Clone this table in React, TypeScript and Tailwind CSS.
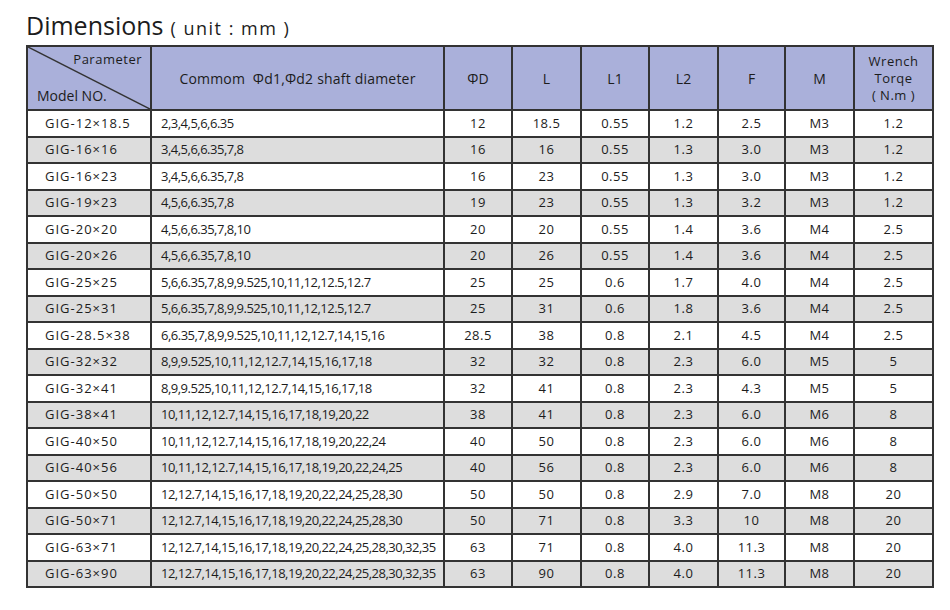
const rows: string[][] = [
  ['GIG-12×18.5', '2,3,4,5,6,6.35', '12', '18.5', '0.55', '1.2', '2.5', 'M3', '1.2'],
  ['GIG-16×16', '3,4,5,6,6.35,7,8', '16', '16', '0.55', '1.3', '3.0', 'M3', '1.2'],
  ['GIG-16×23', '3,4,5,6,6.35,7,8', '16', '23', '0.55', '1.3', '3.0', 'M3', '1.2'],
  ['GIG-19×23', '4,5,6,6.35,7,8', '19', '23', '0.55', '1.3', '3.2', 'M3', '1.2'],
  ['GIG-20×20', '4,5,6,6.35,7,8,10', '20', '20', '0.55', '1.4', '3.6', 'M4', '2.5'],
  ['GIG-20×26', '4,5,6,6.35,7,8,10', '20', '26', '0.55', '1.4', '3.6', 'M4', '2.5'],
  ['GIG-25×25', '5,6,6.35,7,8,9,9.525,10,11,12,12.5,12.7', '25', '25', '0.6', '1.7', '4.0', 'M4', '2.5'],
  ['GIG-25×31', '5,6,6.35,7,8,9,9.525,10,11,12,12.5,12.7', '25', '31', '0.6', '1.8', '3.6', 'M4', '2.5'],
  ['GIG-28.5×38', '6,6.35,7,8,9,9.525,10,11,12,12.7,14,15,16', '28.5', '38', '0.8', '2.1', '4.5', 'M4', '2.5'],
  ['GIG-32×32', '8,9,9.525,10,11,12,12.7,14,15,16,17,18', '32', '32', '0.8', '2.3', '6.0', 'M5', '5'],
  ['GIG-32×41', '8,9,9.525,10,11,12,12.7,14,15,16,17,18', '32', '41', '0.8', '2.3', '4.3', 'M5', '5'],
  ['GIG-38×41', '10,11,12,12.7,14,15,16,17,18,19,20,22', '38', '41', '0.8', '2.3', '6.0', 'M6', '8'],
  ['GIG-40×50', '10,11,12,12.7,14,15,16,17,18,19,20,22,24', '40', '50', '0.8', '2.3', '6.0', 'M6', '8'],
  ['GIG-40×56', '10,11,12,12.7,14,15,16,17,18,19,20,22,24,25', '40', '56', '0.8', '2.3', '6.0', 'M6', '8'],
  ['GIG-50×50', '12,12.7,14,15,16,17,18,19,20,22,24,25,28,30', '50', '50', '0.8', '2.9', '7.0', 'M8', '20'],
  ['GIG-50×71', '12,12.7,14,15,16,17,18,19,20,22,24,25,28,30', '50', '71', '0.8', '3.3', '10', 'M8', '20'],
  ['GIG-63×71', '12,12.7,14,15,16,17,18,19,20,22,24,25,28,30,32,35', '63', '71', '0.8', '4.0', '11.3', 'M8', '20'],
  ['GIG-63×90', '12,12.7,14,15,16,17,18,19,20,22,24,25,28,30,32,35', '63', '90', '0.8', '4.0', '11.3', 'M8', '20'],
]

const widths = ['w-[124px]', 'w-[293px]', 'w-[68px]', 'w-[69px]', 'w-[68px]', 'w-[69px]', 'w-[67px]', 'w-[69px]', 'w-[79px]']
const heads = ['ΦD', 'L', 'L1', 'L2', 'F', 'M']

export default function App() {
  return (
    <div className="w-[950px] h-[610px] bg-white text-[#1c1c1c] font-['Open_Sans','Liberation_Sans',sans-serif]">
      <div className="pt-[8px] pl-[26px] flex items-baseline">
        <span className="text-[25px] leading-[34px]">Dimensions</span>
        <span className="text-[18px] tracking-[1.5px] ml-[7px]">( unit : mm )</span>
      </div>
      <table className="ml-[26px] mt-[3px] w-[906px] table-fixed border-collapse border-2 border-[#333]">
        <colgroup>
          {widths.map((w, i) => (
            <col key={i} className={w} />
          ))}
        </colgroup>
        <thead>
          <tr className="h-[64px] bg-[#aab0da] text-[13px]">
            <th className="relative border-2 border-[#333] p-0 font-normal">
              <svg className="absolute inset-0 w-full h-full" preserveAspectRatio="none" viewBox="0 0 100 100">
                <line x1="0" y1="0" x2="100" y2="100" stroke="#333" strokeWidth="1.5" vectorEffect="non-scaling-stroke" />
              </svg>
              <div className="absolute right-[8px] top-[3px] tracking-[0.5px]">Parameter</div>
              <div className="absolute left-[9px] bottom-[3px] text-[14px]">Model NO.</div>
            </th>
            <th className="border-2 border-[#333] font-normal text-[14px] tracking-[0.2px]">
              Commom&nbsp;&nbsp;Φd1,Φd2 shaft diameter
            </th>
            {heads.map((h) => (
              <th key={h} className="border-2 border-[#333] font-normal text-[14px]">
                {h}
              </th>
            ))}
            <th className="border-2 border-[#333] font-normal leading-[17px] tracking-[0.5px]">
              Wrench
              <br />
              Torqe
              <br />( N.m )
            </th>
          </tr>
        </thead>
        <tbody>
          {rows.map((r, i) => (
            <tr key={i} className={`h-[26.5px] text-[13px] ${i % 2 ? 'bg-[#dddddd]' : 'bg-white'}`}>
              <td className="border-2 border-[#333] text-left pl-[17px] tracking-[1px] p-0 whitespace-nowrap">{r[0]}</td>
              <td className="border-2 border-[#333] pl-[9px] p-0 tracking-[-0.5px] whitespace-nowrap">{r[1]}</td>
              {r.slice(2).map((c, j) => (
                <td key={j} className="border-2 border-[#333] text-center p-0 tracking-[0.5px]">
                  {c}
                </td>
              ))}
            </tr>
          ))}
        </tbody>
      </table>
    </div>
  )
}
